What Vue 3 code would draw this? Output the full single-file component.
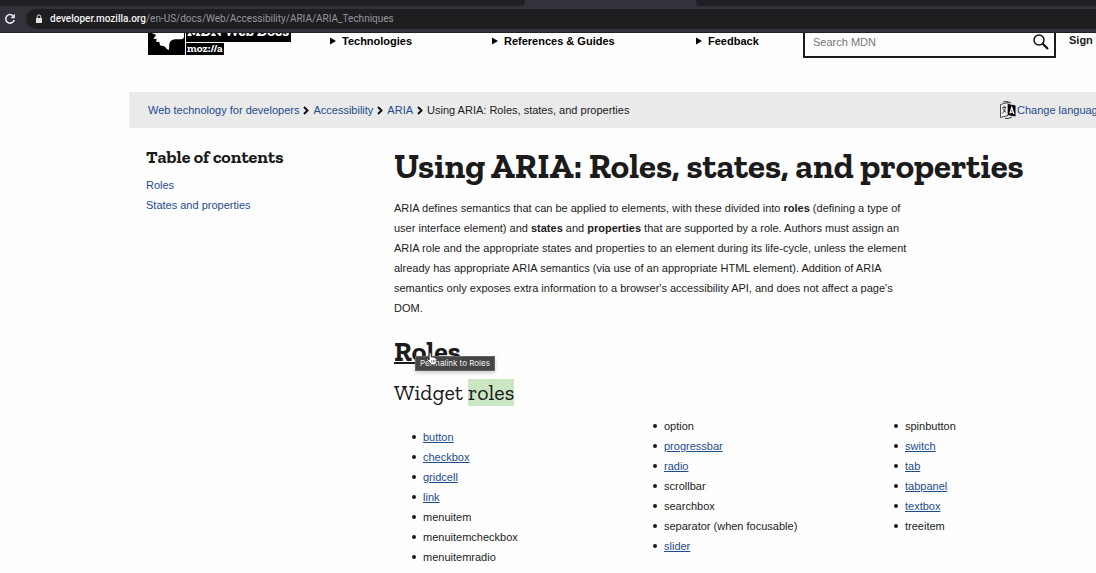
<script setup>
const crumbs = ['Web technology for developers', 'Accessibility', 'ARIA']
const menus = [
  { label: 'Technologies', cls: 'm1' },
  { label: 'References & Guides', cls: 'm2' },
  { label: 'Feedback', cls: 'm3' }
]
const columns = [
  [
    { name: 'button', link: true },
    { name: 'checkbox', link: true },
    { name: 'gridcell', link: true },
    { name: 'link', link: true },
    { name: 'menuitem' },
    { name: 'menuitemcheckbox' },
    { name: 'menuitemradio' }
  ],
  [
    { name: 'option' },
    { name: 'progressbar', link: true },
    { name: 'radio', link: true },
    { name: 'scrollbar' },
    { name: 'searchbox' },
    { name: 'separator (when focusable)' },
    { name: 'slider', link: true }
  ],
  [
    { name: 'spinbutton' },
    { name: 'switch', link: true },
    { name: 'tab', link: true },
    { name: 'tabpanel', link: true },
    { name: 'textbox', link: true },
    { name: 'treeitem' }
  ]
]
</script>

<template>
  <div class="window">
    <div class="chrome">
      <div class="tabs">
        <div class="tab-group left"></div>
        <div class="tab-active"></div>
        <div class="tab-group right"></div>
      </div>
      <div class="toolbar">
        <button class="reload" aria-label="Reload">
          <svg viewBox="0 0 12 12" width="12" height="12">
            <path d="M9.6 3.4A4.3 4.3 0 1 0 10.2 7" fill="none" stroke="#e8e8ea" stroke-width="1.6" />
            <path d="M10.8 .8V5.2H6.4Z" fill="#e8e8ea" />
          </svg>
        </button>
        <div class="address">
          <svg class="lock" viewBox="0 0 8 10" width="8" height="10">
            <rect x="1" y="4" width="6" height="5" rx=".6" fill="#e0e0e2" />
            <path d="M2.3 4V2.6a1.7 1.7 0 0 1 3.4 0V4" fill="none" stroke="#e0e0e2" stroke-width="1" />
          </svg>
          <span class="url"><b>developer.mozilla.org</b>/en-US/docs/Web/Accessibility/ARIA/ARIA_Techniques</span>
        </div>
      </div>
    </div>

    <header class="site-header">
      <a class="logo" href="#" aria-label="MDN Web Docs">
        <svg class="dino" viewBox="0 0 37 22" width="37" height="22">
          <rect width="37" height="22" fill="#000" />
          <path d="M4 0L8 2 5.3 5.7 8.7 6 8.2 9 11.3 8.7 12 12.3 16.7 13.5Q18 15.8 21 17L21.3 11.5Q21.8 6.5 27 6.3H33Q36 6 36 3.5V0Z" fill="#fff" />
        </svg>
        <span class="wordmark">
          <span class="word top">MDN Web Docs</span>
          <span class="word bottom">moz://a</span>
        </span>
      </a>
      <nav class="menus">
        <button v-for="m in menus" :key="m.label" class="menu" :class="m.cls">
          <svg viewBox="0 0 6 8" width="6" height="8"><path d="M0 0.5L6 4 0 7.5Z" fill="#000" /></svg>
          {{ m.label }}
        </button>
      </nav>
      <form class="search" @submit.prevent>
        <input type="text" placeholder="Search MDN" aria-label="Search MDN" />
        <button aria-label="Search">
          <svg viewBox="0 0 18 18" width="18" height="18">
            <circle cx="7" cy="7" r="5" fill="none" stroke="#111" stroke-width="1.5" />
            <path d="M10.7 10.7L16 16" stroke="#111" stroke-width="2.2" />
          </svg>
        </button>
      </form>
      <a class="signin" href="#">Sign in</a>
    </header>

    <div class="crumb-bar">
      <nav class="crumbs">
        <template v-for="c in crumbs" :key="c">
          <a href="#">{{ c }}</a>
          <svg viewBox="0 0 6 9" width="6" height="9">
            <path d="M1 1L4.5 4.5 1 8" fill="none" stroke="#111" stroke-width="2" />
          </svg>
        </template>
        <span>Using ARIA: Roles, states, and properties</span>
      </nav>
      <a class="language" href="#">
        <svg viewBox="0 0 16 18" width="16" height="18">
          <path d="M.5 3.5L8 1.5V14.5L.5 16.5Z" fill="#f4f4f4" stroke="#222" stroke-width=".8" />
          <path d="M8 3L15.5 4.5V15.5L8 14Z" fill="#000" />
          <path d="M3 1Q7-.5 11 2M5 17.5Q9 18 12 16" fill="none" stroke="#222" stroke-width=".9" />
          <path d="M2 7L6.3 6M4 4.8V6.3M2.2 12.5Q5 10.5 5.4 6.5M2.7 8.3L6.2 11.5" fill="none" stroke="#222" stroke-width=".9" />
          <path d="M9.8 12.5L11.8 6.5 13.8 13M10.5 10.8L13 11.1" fill="none" stroke="#fff" stroke-width="1.2" />
        </svg>
        Change language
      </a>
    </div>

    <div class="layout">
      <aside class="toc">
        <h2>Table of contents</h2>
        <a href="#roles">Roles</a>
        <a href="#states">States and properties</a>
      </aside>
      <main class="article">
        <h1>Using ARIA: Roles, states, and properties</h1>
        <p>
          ARIA defines semantics that can be applied to elements, with these divided into
          <strong>roles</strong> (defining a type of user interface element) and <strong>states</strong> and
          <strong>properties</strong> that are supported by a role. Authors must assign an ARIA role and the
          appropriate states and properties to an element during its life-cycle, unless the element already has
          appropriate ARIA semantics (via use of an appropriate HTML element). Addition of ARIA semantics only
          exposes extra information to a browser's accessibility API, and does not affect a page's DOM.
        </p>
        <h2 id="roles">
          <a href="#roles">Roles</a>
          <span class="tooltip" role="tooltip">Permalink to Roles</span>
          <svg class="hand" viewBox="0 0 12 14" width="12" height="14">
            <path d="M3.2 8V2Q3.2.8 4.2.8T5.2 2V5Q6.8 4.3 7.2 5.4 8.6 4.8 9 6 10.8 5.6 10.8 7.2V9.5Q10.8 13 7.5 13 5 13 3.8 11L1 8Q.4 6.8 1.6 6.7Z" fill="#fff" stroke="#222" stroke-width=".8" />
            <path d="M5.8 8V10.5M7.4 8V10.5M9 8V10.5" stroke="#333" stroke-width=".6" />
          </svg>
        </h2>
        <h3>Widget <mark>roles</mark></h3>
        <div class="columns">
          <ul v-for="(col, i) in columns" :key="i">
            <li v-for="r in col" :key="r.name">
              <a v-if="r.link" href="#">{{ r.name }}</a>
              <template v-else>{{ r.name }}</template>
            </li>
          </ul>
        </div>
      </main>
    </div>
  </div>
</template>

<style>
body {
  margin: 0;
  background: #fefefe;
}
</style>

<style scoped>
.window {
  height: 100vh;
  overflow: hidden;
  font: 11px/20px "Liberation Sans", Arial, sans-serif;
  color: #1b1b1b;
}
a {
  color: #1d4b8f;
  text-decoration: none;
}
button {
  padding: 0;
  border: 0;
  background: none;
  font: inherit;
  color: inherit;
}
svg {
  display: block;
  flex: none;
}
.chrome {
  background: #35313a;
  border-bottom: 1px solid #222125;
}
.tabs {
  display: flex;
  height: 6px;
}
.tab-group {
  background: #202024;
}
.left {
  flex: 525;
  border-bottom-right-radius: 4px;
}
.tab-active {
  flex: 171;
}
.right {
  flex: 400;
  border-bottom-left-radius: 4px;
}
.toolbar {
  display: flex;
  align-items: center;
  height: 26px;
}
.reload {
  flex: none;
  width: 26px;
  padding-left: 4px;
}
.address {
  display: flex;
  flex: 1;
  align-items: center;
  gap: 7px;
  height: 20px;
  padding-left: 9px;
  border-radius: 10px 0 0 10px;
  background: #1e1e21;
}
.url {
  font-family: Roboto, sans-serif;
  font-size: 10px;
  color: #96969a;
  white-space: nowrap;
}
.url b {
  font-weight: 500;
  color: #f1f1f3;
}
.site-header {
  display: flex;
  align-items: flex-start;
  height: 59px;
  padding-left: 148px;
  white-space: nowrap;
}
.logo {
  display: flex;
  gap: 1px;
  flex: none;
  width: 182px;
  height: 22px;
  overflow: hidden;
}
.wordmark {
  display: flex;
  flex-direction: column;
  justify-content: flex-end;
  align-items: flex-start;
  gap: 1px;
}
.word {
  flex: none;
  background: #000;
  color: #fff;
  font: bold 11px/12px "Zilla Slab", "Liberation Serif", serif;
}
.word.top {
  padding: 0 2px 5px 1px;
  font-size: 15px;
}
.word.bottom {
  padding: 0 1px;
}
.menus {
  display: flex;
  flex: none;
  width: 473px;
}
.menu {
  display: flex;
  align-items: center;
  gap: 6px;
  height: 15px;
  font-weight: bold;
  color: #000;
}
.m1 {
  width: 162px;
}
.m2 {
  width: 204px;
}
.search {
  display: flex;
  box-sizing: border-box;
  flex: 1;
  height: 25px;
  border: 2px solid #1b1b1b;
  border-top: 0;
}
.search input {
  flex: 1;
  min-width: 0;
  height: 18px;
  padding: 0 0 0 8px;
  border: 0;
  outline: 0;
  background: none;
  font: inherit;
}
.search input::placeholder {
  color: #757575;
  opacity: 1;
}
.search button {
  width: 22px;
  height: 18px;
}
.signin {
  flex: none;
  width: 27px;
  padding-left: 13px;
  overflow: hidden;
  line-height: 15px;
  font-weight: bold;
  color: #1b1b1b;
}
.crumb-bar {
  display: flex;
  justify-content: space-between;
  align-items: center;
  height: 36px;
  margin-left: 129px;
  padding-left: 19px;
  background: #eaeaea;
  white-space: nowrap;
}
.crumbs {
  display: flex;
  align-items: center;
  gap: 4px;
}
.language {
  display: flex;
  align-items: center;
  gap: 1px;
  width: 96px;
  overflow: hidden;
}
.layout {
  display: grid;
  grid-template-columns: 248px 1fr;
  padding-left: 146px;
}
h1,
h2,
h3 {
  margin: 0;
  font-family: "Zilla Slab", "Liberation Serif", serif;
}
.toc {
  display: flex;
  flex-direction: column;
  align-items: flex-start;
  padding-top: 19px;
}
.toc h2 {
  margin-bottom: 8px;
  font-size: 18px;
  line-height: 20px;
}
.article {
  padding-top: 18px;
}
h1 {
  font-size: 35px;
  line-height: 40px;
}
p {
  max-width: 520px;
  margin: 12px 0 18px;
}
.article h2 {
  position: relative;
  width: max-content;
  font-size: 28px;
  line-height: 32px;
}
.article h2 a {
  color: #1b1b1b;
  text-decoration: underline;
  text-decoration-thickness: 2px;
}
.tooltip {
  position: absolute;
  top: 20px;
  left: 21px;
  padding: 0 4px;
  border: 1px solid #666;
  background: #454545;
  color: #f2f2f2;
  font: 8px/13px Inter, sans-serif;
  white-space: nowrap;
  box-shadow: 0 2px 4px #0003;
}
.hand {
  position: absolute;
  top: 16px;
  left: 32px;
}
h3 {
  margin-top: 11px;
  font-size: 22px;
  font-weight: normal;
  line-height: 28px;
}
mark {
  background: #cbe6c3;
  color: inherit;
}
.columns {
  display: grid;
  grid-template-columns: repeat(3, 241px);
  margin-top: 9px;
}
ul {
  margin: 0;
  padding-left: 18px;
  list-style: none;
}
ul:first-child {
  padding-top: 11px;
}
li {
  display: flex;
  align-items: center;
  gap: 7px;
}
li::before {
  width: 4px;
  height: 4px;
  border-radius: 50%;
  background: #1b1b1b;
  content: "";
}
li a {
  text-decoration: underline;
}
</style>
